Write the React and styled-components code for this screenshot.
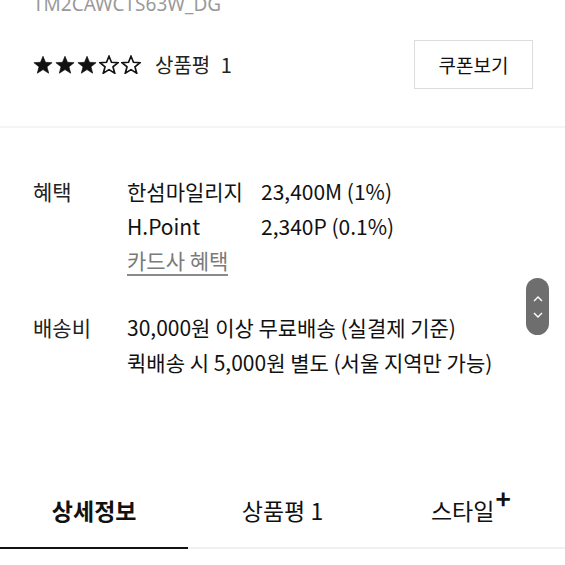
import React from "react";
import styled, { createGlobalStyle } from "styled-components";

const GlobalStyle = createGlobalStyle`
    html, body {
        margin: 0;
        padding: 0;
        background: #fff;
    }
    body {
        font-family: "Noto Sans CJK KR", "Noto Sans", sans-serif;
        color: #111;
        overflow: hidden;
    }
`

const Page = styled.div`
    width: 565px;
    height: 565px;
    overflow: hidden;
    position: relative;
`
const Code = styled.div`
    padding: 0 33px;
    margin-top: -11px;
    height: 30px;
    line-height: 30px;
    font-size: 19px;
    color: #9a9a9a;
    font-family: "Noto Sans", sans-serif;
`
const RatingRow = styled.div`
    display: flex;
    align-items: center;
    justify-content: space-between;
    padding: 21px 32px 0 33px;
    height: 48px;
`
const Rating = styled.div`
    display: flex;
    align-items: center;
`
const Stars = styled.div`
    display: flex;
    gap: 2px;
    margin-right: 14px;
`
const ReviewText = styled.span`
    font-size: 20px;
    color: #222;
    word-spacing: 6px;
`
const CouponButton = styled.button`
    width: 119px;
    height: 49px;
    border: 1px solid #dcdcdc;
    background: #fff;
    font-family: "Noto Sans CJK KR", sans-serif;
    font-size: 19px;
    color: #111;
    padding: 0;
`
const Divider = styled.div`
    margin-top: 38px;
    height: 2px;
    background: #f4f4f4;
`
const InfoSection = styled.div`
    padding: 46px 33px 0 33px;
    display: flex;
    flex-direction: column;
    gap: 34px;
`
const InfoRow = styled.div`
    display: grid;
    grid-template-columns: 94px 1fr;
    font-size: 21px;
    line-height: 35px;
`
const Label = styled.div`
    color: #222;
`
const Values = styled.div`
    display: flex;
    flex-direction: column;
`
const ValueLine = styled.div`
    display: grid;
    grid-template-columns: 134px auto;
`
const CardLink = styled.span`
    color: #7a7a7a;
    align-self: flex-start;
    line-height: 27px;
    margin-top: 3px;
    border-bottom: 2px solid #8a8a8a;
`
const Scroller = styled.div`
    position: absolute;
    left: 526px;
    top: 278px;
    width: 23px;
    height: 57px;
    border-radius: 12px;
    background: #6e6e6e;
    display: flex;
    flex-direction: column;
    align-items: center;
    justify-content: center;
    gap: 10px;
`
const Tabs = styled.div`
    position: absolute;
    left: 0;
    right: 0;
    top: 479px;
    display: grid;
    grid-template-columns: repeat(3, 1fr);
    border-bottom: 2px solid #f0f0f0;
`
const Tab = styled.div`
    height: 70px;
    display: flex;
    align-items: center;
    justify-content: center;
    font-size: 23px;
    font-weight: ${p => p.active ? 700 : 400};
    color: #111;
    margin-bottom: -2px;
    border-bottom: 2px solid ${p => p.active ? '#111' : 'transparent'};
    padding-bottom: 6px;
    box-sizing: border-box;
`
const Plus = styled.span`
    font-weight: 700;
    font-size: 26px;
    line-height: 1;
    align-self: flex-start;
    margin-top: 6px;
    margin-left: 1px;
`

const Star = ({ filled }) => (
    <svg width="20" height="19" viewBox="0 0 24 23">
        <polygon
            points="12,1.5 15,8.8 23,9.3 16.8,14.3 18.9,22 12,17.7 5.1,22 7.2,14.3 1,9.3 9,8.8"
            fill={filled ? '#111' : '#fff'}
            stroke="#111"
            strokeWidth={filled ? 0.8 : 2}
            strokeLinejoin="miter"
        />
    </svg>
)

const Chevron = ({ up }) => (
    <svg width="10" height="6" viewBox="0 0 10 6">
        <polyline
            points={up ? '1,5 5,1 9,5' : '1,1 5,5 9,1'}
            fill="none"
            stroke="#fff"
            strokeWidth="1.4"
        />
    </svg>
)

const App = () => {
    const rating = 3
    return (
        <Page>
            <GlobalStyle />
            <Code>TM2CAWCTS63W_DG</Code>
            <RatingRow>
                <Rating>
                    <Stars>
                        {[0, 1, 2, 3, 4].map(i => <Star key={i} filled={i < rating} />)}
                    </Stars>
                    <ReviewText>상품평 1</ReviewText>
                </Rating>
                <CouponButton>쿠폰보기</CouponButton>
            </RatingRow>
            <Divider />
            <InfoSection>
                <InfoRow>
                    <Label>혜택</Label>
                    <Values>
                        <ValueLine><span>한섬마일리지</span><span>23,400M (1%)</span></ValueLine>
                        <ValueLine><span>H.Point</span><span>2,340P (0.1%)</span></ValueLine>
                        <CardLink>카드사 혜택</CardLink>
                    </Values>
                </InfoRow>
                <InfoRow>
                    <Label>배송비</Label>
                    <Values>
                        <span>30,000원 이상 무료배송 (실결제 기준)</span>
                        <span>퀵배송 시 5,000원 별도 (서울 지역만 가능)</span>
                    </Values>
                </InfoRow>
            </InfoSection>
            <Scroller>
                <Chevron up />
                <Chevron />
            </Scroller>
            <Tabs>
                <Tab active>상세정보</Tab>
                <Tab>상품평 1</Tab>
                <Tab>스타일<Plus>+</Plus></Tab>
            </Tabs>
        </Page>
    )
}

export default App;
